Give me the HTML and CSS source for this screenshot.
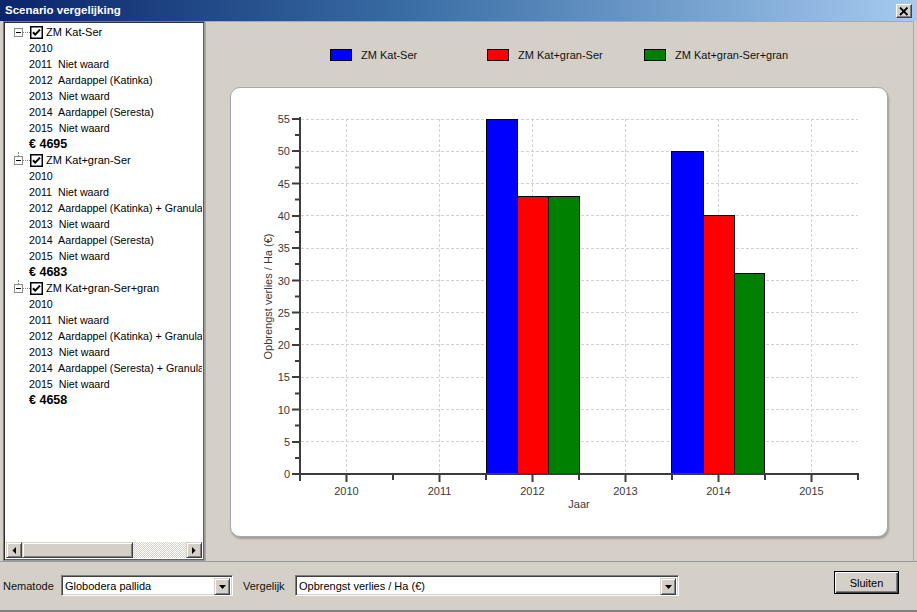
FILE: index.html
```html
<!DOCTYPE html>
<html>
<head>
<meta charset="utf-8">
<title>Scenario vergelijking</title>
<link rel="stylesheet" href="styles.css">
</head>
<body>
<div class="window">
  <div class="titlebar">
    <span class="title">Scenario vergelijking</span>
    <span class="close"><svg width="10" height="9" viewBox="0 0 10 9"><path d="M1 0.5 L8.5 8 M8.5 0.5 L1 8" stroke="#000" stroke-width="1.8" fill="none"/></svg></span>
  </div>
  <div class="main">
    <div class="tree">
      <div class="tree-body">
        <div class="node root first"><span class="exp"></span><span class="dots"></span><span class="chk"><svg width="13" height="13" viewBox="0 0 13 13"><rect x="0.75" y="0.75" width="11.5" height="11.5" fill="#fff" stroke="#000" stroke-width="1.5"/><path d="M3 6.2 L5.2 8.6 L10 3.6" stroke="#000" stroke-width="2" fill="none"/></svg></span><span class="lbl">ZM Kat-Ser</span></div>
        <div class="node child">2010</div>
        <div class="node child">2011  Niet waard</div>
        <div class="node child">2012  Aardappel (Katinka)</div>
        <div class="node child">2013  Niet waard</div>
        <div class="node child">2014  Aardappel (Seresta)</div>
        <div class="node child">2015  Niet waard</div>
        <div class="node child total">€ 4695</div>
        <div class="node root"><span class="exp"></span><span class="dots"></span><span class="chk"><svg width="13" height="13" viewBox="0 0 13 13"><rect x="0.75" y="0.75" width="11.5" height="11.5" fill="#fff" stroke="#000" stroke-width="1.5"/><path d="M3 6.2 L5.2 8.6 L10 3.6" stroke="#000" stroke-width="2" fill="none"/></svg></span><span class="lbl">ZM Kat+gran-Ser</span></div>
        <div class="node child">2010</div>
        <div class="node child">2011  Niet waard</div>
        <div class="node child">2012  Aardappel (Katinka) + Granulaat</div>
        <div class="node child">2013  Niet waard</div>
        <div class="node child">2014  Aardappel (Seresta)</div>
        <div class="node child">2015  Niet waard</div>
        <div class="node child total">€ 4683</div>
        <div class="node root"><span class="exp"></span><span class="dots"></span><span class="chk"><svg width="13" height="13" viewBox="0 0 13 13"><rect x="0.75" y="0.75" width="11.5" height="11.5" fill="#fff" stroke="#000" stroke-width="1.5"/><path d="M3 6.2 L5.2 8.6 L10 3.6" stroke="#000" stroke-width="2" fill="none"/></svg></span><span class="lbl">ZM Kat+gran-Ser+gran</span></div>
        <div class="node child">2010</div>
        <div class="node child">2011  Niet waard</div>
        <div class="node child">2012  Aardappel (Katinka) + Granulaat</div>
        <div class="node child">2013  Niet waard</div>
        <div class="node child">2014  Aardappel (Seresta) + Granulaat</div>
        <div class="node child">2015  Niet waard</div>
        <div class="node child total">€ 4658</div>
      </div>
      <div class="hscroll">
        <span class="sbtn"><svg width="4" height="7" viewBox="0 0 4 7"><path d="M4 0 V7 L0.5 3.5 Z" fill="#000"/></svg></span>
        <span class="thumb"></span>
        <span class="track"></span>
        <span class="sbtn"><svg width="4" height="7" viewBox="0 0 4 7"><path d="M0 0 V7 L3.5 3.5 Z" fill="#000"/></svg></span>
      </div>
    </div>
    <div class="chartpanel">
      <div class="legend">
        <div class="litem"><span class="swatch blue"></span><span>ZM Kat-Ser</span></div>
        <div class="litem"><span class="swatch red"></span><span>ZM Kat+gran-Ser</span></div>
        <div class="litem"><span class="swatch green"></span><span>ZM Kat+gran-Ser+gran</span></div>
      </div>
      <div class="card">
        <svg class="plot" width="656" height="448" viewBox="0 0 656 448">
          <g stroke="#d2d2d2" stroke-width="1" stroke-dasharray="3,2" fill="none">
            <path d="M70 31.5 H627 M70 63.5 H627 M70 95.5 H627 M70 127.5 H627 M70 160.5 H627 M70 192.5 H627 M70 224.5 H627 M70 256.5 H627 M70 289.5 H627 M70 321.5 H627 M70 353.5 H627"/>
            <path d="M115.5 31 V385 M208.5 31 V385 M301.5 31 V385 M394.5 31 V385 M487.5 31 V385 M580.5 31 V385"/>
          </g>
          <g stroke="#000" stroke-width="1">
            <rect x="255.5" y="31.5" width="31" height="354.5" fill="#0000ff"/>
            <rect x="286.5" y="108.5" width="31" height="277.5" fill="#ff0000"/>
            <rect x="317.5" y="108.5" width="31" height="277.5" fill="#008000"/>
            <rect x="440.5" y="63.5" width="32" height="322.5" fill="#0000ff"/>
            <rect x="472.5" y="127.5" width="31" height="258.5" fill="#ff0000"/>
            <rect x="503.5" y="185.5" width="30" height="200.5" fill="#008000"/>
          </g>
          <g stroke="#3c3c3c" stroke-width="2" fill="none">
            <path d="M69 29 V393"/>
            <path d="M68 386 H628"/>
            <path d="M61 386 H69 M61 354 H69 M61 321.5 H69 M61 289 H69 M61 257 H69 M61 224.5 H69 M61 192.5 H69 M61 160 H69 M61 128 H69 M61 95.5 H69 M61 63 H69 M61 31 H69"/>
            <path d="M64 370 H69 M64 337.5 H69 M64 305.5 H69 M64 273 H69 M64 241 H69 M64 208.5 H69 M64 176 H69 M64 144 H69 M64 111.5 H69 M64 79.5 H69 M64 47 H69"/>
            <path d="M162 386 V392 M255 386 V392 M348 386 V392 M441 386 V392 M534 386 V392 M627 386 V392"/>
            <path d="M115.5 386 V394 M208.5 386 V394 M301.5 386 V394 M394.5 386 V394 M487.5 386 V394 M580.5 386 V394"/>
          </g>
          <g class="ticklbl" text-anchor="end">
            <text x="59" y="390">0</text>
            <text x="59" y="358">5</text>
            <text x="59" y="325.5">10</text>
            <text x="59" y="293">15</text>
            <text x="59" y="261">20</text>
            <text x="59" y="228.5">25</text>
            <text x="59" y="196.5">30</text>
            <text x="59" y="164">35</text>
            <text x="59" y="132">40</text>
            <text x="59" y="99.5">45</text>
            <text x="59" y="67">50</text>
            <text x="59" y="35">55</text>
          </g>
          <g class="ticklbl" text-anchor="middle">
            <text x="115.5" y="407">2010</text>
            <text x="208.5" y="407">2011</text>
            <text x="301.5" y="407">2012</text>
            <text x="394.5" y="407">2013</text>
            <text x="487.5" y="407">2014</text>
            <text x="580.5" y="407">2015</text>
            <text x="348" y="420">Jaar</text>
            <text transform="translate(41 208.5) rotate(-90)" x="0" y="0">Opbrengst verlies / Ha (€)</text>
          </g>
        </svg>
      </div>
    </div>
  </div>
  <div class="bottombar">
    <span class="flabel first">Nematode</span>
    <div class="combo c1"><span class="cval">Globodera pallida</span><span class="dd"><svg width="7" height="4" viewBox="0 0 7 4"><path d="M0 0 H7 L3.5 4 Z" fill="#000"/></svg></span></div>
    <span class="flabel second">Vergelijk</span>
    <div class="combo c2"><span class="cval">Opbrengst verlies / Ha (€)</span><span class="dd"><svg width="7" height="4" viewBox="0 0 7 4"><path d="M0 0 H7 L3.5 4 Z" fill="#000"/></svg></span></div>
    <button class="btn">Sluiten</button>
  </div>
</div>
</body>
</html>
```

FILE: styles.css
```css
* { box-sizing: border-box; }
html, body { margin: 0; padding: 0; }
body {
  width: 917px;
  height: 612px;
  overflow: hidden;
  background: #d4d0c8;
  font-family: "Liberation Sans", Arial, sans-serif;
  font-size: 11px;
  color: #000;
}
.window {
  width: 917px;
  height: 612px;
  display: flex;
  flex-direction: column;
  background: #d4d0c8;
}
.titlebar {
  height: 21px;
  flex: none;
  display: flex;
  align-items: flex-start;
  background: linear-gradient(to right, #0a246a 0%, #3a6ea5 45%, #a6caf0 100%);
}
.title {
  color: #fff;
  font-weight: bold;
  font-size: 11.5px;
  line-height: 21px;
  padding-left: 5px;
}
.close {
  margin-left: auto;
  margin-right: 5px;
  margin-top: 4px;
  width: 16px;
  height: 14px;
  background: #d4d0c8;
  border: 1px solid;
  border-color: #fff #404040 #404040 #fff;
  box-shadow: inset -1px -1px #808080;
  display: flex;
  align-items: center;
  justify-content: center;
}
.close svg { display: block; }

.main {
  height: 541px;
  flex: none;
  display: flex;
  padding-left: 3px;
  border-bottom: 1px solid #9a9a9a;
}
.tree {
  width: 202px;
  height: 540px;
  background: #fff;
  border: 1px solid;
  border-color: #7a7a7a #9a9a9a #9a9a9a #7a7a7a;
  box-shadow: inset 1px 1px #303030, inset -1px -1px #606060;
  padding: 2px;
  display: flex;
  flex-direction: column;
  flex: none;
}
.tree-body {
  flex: 1;
  overflow: hidden;
}
.node {
  height: 16px;
  line-height: 16px;
  white-space: pre;
  overflow: hidden;
  position: relative;
  font-size: 10.7px;
}
.node.root {
  display: flex;
  align-items: center;
  padding-left: 8px;
}
.node.root:not(.first)::before {
  content: "";
  position: absolute;
  left: 12px;
  top: 0;
  height: 4px;
  border-left: 1px dotted #808080;
}
.exp {
  width: 9px;
  height: 9px;
  border: 1px solid #8a8a8a;
  background: #fff linear-gradient(#000, #000) no-repeat center / 5px 1px;
  flex: none;
}
.dots {
  width: 7px;
  border-top: 1px dotted #808080;
  flex: none;
}
.chk {
  width: 13px;
  height: 13px;
  flex: none;
  display: block;
}
.chk svg { display: block; }
.lbl { margin-left: 3px; font-size: 11px; }
.node.child { padding-left: 23px; }
.node.total {
  font-weight: bold;
  font-size: 12.5px;
}
.hscroll {
  height: 16px;
  flex: none;
  display: flex;
}
.sbtn, .thumb {
  background: #d4d0c8;
  border: 1px solid;
  border-color: #d4d0c8 #404040 #404040 #d4d0c8;
  box-shadow: inset 1px 1px #fff, inset -1px -1px #808080;
}
.sbtn {
  width: 16px;
  height: 16px;
  flex: none;
  display: flex;
  align-items: center;
  justify-content: center;
}
.sbtn svg { display: block; }
.thumb {
  width: 111px;
  height: 16px;
  flex: none;
}
.track {
  flex: 1;
  height: 16px;
  background: repeating-conic-gradient(#ffffff 0 25%, #d4d0c8 0 50%) 0 0 / 2px 2px;
}

.chartpanel {
  width: 709px;
  height: 541px;
  border: 1px solid #a8a8a8;
  border-bottom: none;
  display: flex;
  flex-direction: column;
  flex: none;
}
.legend {
  height: 65px;
  flex: none;
  display: flex;
  align-items: flex-start;
  padding-top: 27px;
  padding-left: 124px;
}
.litem {
  width: 157px;
  display: flex;
  align-items: center;
  height: 12px;
  line-height: 12px;
  color: #111;
}
.swatch {
  width: 22px;
  height: 12px;
  border: 1px solid #000;
  margin-right: 9px;
  flex: none;
}
.swatch.blue { background: #0000ff; }
.swatch.red { background: #ff0000; }
.swatch.green { background: #008000; }
.card {
  width: 658px;
  height: 450px;
  margin-left: 24px;
  background: #fff;
  border: 1px solid #a8a8a8;
  border-radius: 10px;
  box-shadow: 1px 2px 2px rgba(0, 0, 0, 0.25);
  overflow: hidden;
}
.plot { display: block; }
.ticklbl text {
  font-family: "Liberation Sans", Arial, sans-serif;
  font-size: 11px;
  fill: #3a3a3a;
}

.bottombar {
  height: 50px;
  flex: none;
  display: flex;
  align-items: flex-start;
  padding-left: 3px;
  border-bottom: 2px solid #808080;
}
.flabel {
  line-height: 14px;
  margin-top: 17px;
  color: #111;
}
.flabel.first { width: 58px; }
.flabel.second { width: 52px; margin-left: 10px; }
.combo {
  height: 21px;
  margin-top: 13px;
  background: #fff;
  border: 1px solid;
  border-color: #808080 #fff #fff #808080;
  box-shadow: inset 1px 1px #404040, inset -1px -1px #d4d0c8;
  display: flex;
  align-items: stretch;
  padding: 2px;
}
.combo.c1 { width: 172px; }
.combo.c2 { width: 384px; }
.cval {
  flex: 1;
  line-height: 17px;
  padding-left: 1px;
  white-space: nowrap;
  overflow: hidden;
}
.dd {
  width: 16px;
  height: 17px;
  flex: none;
  background: #d4d0c8;
  border: 1px solid;
  border-color: #d4d0c8 #404040 #404040 #d4d0c8;
  box-shadow: inset 1px 1px #fff, inset -1px -1px #808080;
  display: flex;
  align-items: center;
  justify-content: center;
}
.dd svg { display: block; }
.btn {
  margin-left: auto;
  margin-right: 18px;
  margin-top: 9px;
  width: 65px;
  height: 23px;
  background: #d4d0c8;
  border: 1px solid #000;
  box-shadow: inset 1px 1px #fff, inset -1px -1px #404040, inset -2px -2px #808080;
  font-family: "Liberation Sans", Arial, sans-serif;
  font-size: 11px;
  color: #000;
  padding: 0;
}
```
